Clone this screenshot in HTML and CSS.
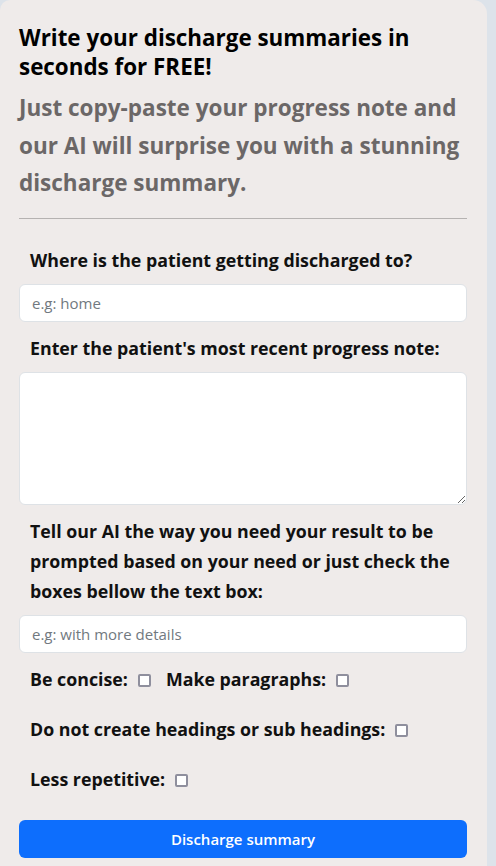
FILE: index.html
```html
<!DOCTYPE html>
<html lang="en">
<head>
<meta charset="utf-8">
<title>Discharge summary</title>
<link rel="stylesheet" href="styles.css">
</head>
<body>
<main class="card">
  <h1 class="title">Write your discharge summaries in seconds for FREE!</h1>
  <p class="subtitle">Just copy-paste your progress note and our AI will surprise you with a stunning discharge summary.</p>
  <hr class="divider">
  <form class="form">
    <div class="group">
      <label class="label" for="dest">Where is the patient getting discharged to?</label>
      <input class="control" id="dest" type="text" placeholder="e.g: home">
    </div>
    <div class="group">
      <label class="label" for="note">Enter the patient's most recent progress note:</label>
      <textarea class="control area" id="note"></textarea>
    </div>
    <div class="group">
      <label class="label" for="prompt">Tell our AI the way you need your result to be prompted based on your need or just check the boxes bellow the text box:</label>
      <input class="control" id="prompt" type="text" placeholder="e.g: with more details">
    </div>
    <div class="checks">
      <div class="row">
        <label class="check">Be concise:<input type="checkbox" class="box"></label>
        <label class="check">Make paragraphs:<input type="checkbox" class="box"></label>
      </div>
      <div class="row">
        <label class="check">Do not create headings or sub headings:<input type="checkbox" class="box"></label>
      </div>
      <div class="row">
        <label class="check">Less repetitive:<input type="checkbox" class="box"></label>
      </div>
    </div>
    <button type="button" class="btn">Discharge summary</button>
  </form>
</main>
</body>
</html>
```
FILE: styles.css
```css
* { box-sizing: border-box; }

html, body {
  margin: 0;
  padding: 0;
}

body {
  background: #dde3ea;
  font-family: "Open Sans", "Noto Sans", sans-serif;
  color: #111;
  width: 496px;
  height: 866px;
  overflow: hidden;
}

.card {
  width: 487px;
  min-height: 900px;
  background: #efebea;
  border-radius: 10px 14px 0 0;
  padding: 23px 20px 0 19px;
}

.title {
  margin: 0;
  font-size: 22.4px;
  line-height: 29px;
  font-weight: 700;
  color: #000;
  letter-spacing: 0;
}

.subtitle {
  margin: 8px 0 0;
  font-size: 22.5px;
  line-height: 37.5px;
  font-weight: 700;
  color: #6b6767;
}

.divider {
  margin: 16px 0 0;
  border: 0;
  border-top: 1px solid #b5b2b1;
  height: 0;
}

.form {
  display: flex;
  flex-direction: column;
  padding-top: 26px;
}

.group {
  display: flex;
  flex-direction: column;
  margin-bottom: 11px;
}

.label {
  display: block;
  padding: 0 11px;
  font-size: 17.8px;
  line-height: 30px;
  font-weight: 700;
  margin-bottom: 9px;
  color: #111;
}

.control {
  display: block;
  width: 100%;
  height: 38px;
  padding: 6px 12px;
  border: 1px solid #dee2e6;
  border-radius: 6px;
  background: #fff;
  font-family: "Open Sans", "Noto Sans", sans-serif;
  font-size: 15px;
  line-height: 24px;
  color: #212529;
  outline: none;
}

.control::placeholder {
  color: #717980;
}

.area {
  height: 133px;
  resize: vertical;
}

.checks {
  display: flex;
  flex-direction: column;
  gap: 20px;
  padding: 0 11px;
}

.row {
  display: flex;
  align-items: baseline;
  height: 30px;
}

.check {
  font-size: 17.8px;
  line-height: 30px;
  font-weight: 700;
  color: #111;
  white-space: nowrap;
}

.box {
  appearance: none;
  -webkit-appearance: none;
  display: inline-block;
  width: 13px;
  height: 13px;
  margin: 0 15px 0 10px;
  border: 2px solid #8f8f9d;
  border-radius: 2px;
  background: #fff;
  vertical-align: -1px;
}

.btn {
  margin-top: 26px;
  height: 38px;
  width: 100%;
  border: 0;
  border-radius: 6px;
  background: #0d6efd;
  color: #fff;
  font-family: "Open Sans", "Noto Sans", sans-serif;
  font-size: 15px;
  font-weight: 600;
  display: flex;
  align-items: center;
  justify-content: center;
}
```
